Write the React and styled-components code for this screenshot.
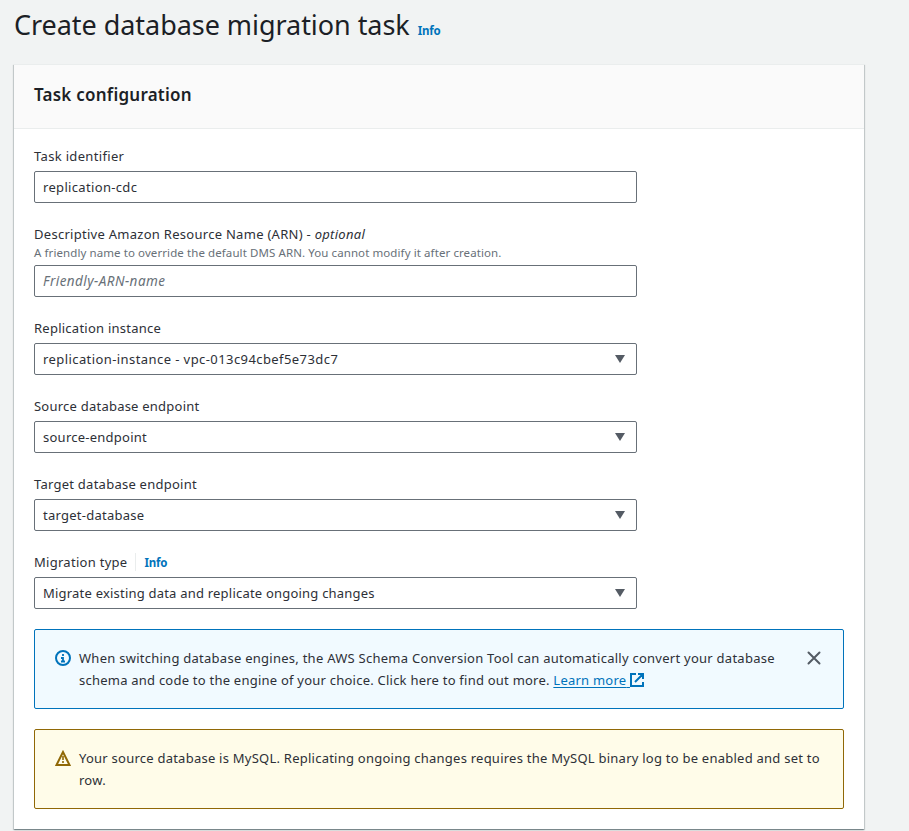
import React from "react";
import styled, { createGlobalStyle } from "styled-components";

const GlobalStyle = createGlobalStyle`
  *, *::before, *::after { box-sizing: border-box; }
  body {
    margin: 0;
    background: #f1f3f3;
    color: #2d3037;
    font-family: "Noto Sans", "Open Sans", sans-serif;
    font-size: 13px;
    line-height: 22px;
    overflow: hidden;
  }
`;

const Page = styled.main`
  width: 909px;
  height: 831px;
  padding: 7px 45px 0 14px;
  overflow: hidden;
`;

const TitleBar = styled.header`
  display: flex;
  align-items: baseline;
  gap: 8px;
  height: 57px;
`;

const Title = styled.h1`
  margin: 0;
  color: #1c1f26;
  font-size: 27px;
  font-weight: 400;
  line-height: 36px;
  white-space: nowrap;
  letter-spacing: -0.05px;
`;

const InfoLink = styled.a`
  color: #0073bb;
  font-size: 11.5px;
  font-weight: 700;
  line-height: 18px;
  letter-spacing: -0.2px;
`;

const Panel = styled.section`
  height: 765px;
  background: #fff;
  border-top: 1px solid #eaeded;
  box-shadow: 0 1px 1px 0 rgba(0, 28, 36, 0.3), 1px 1px 1px 0 rgba(0, 28, 36, 0.15),
    -1px 1px 1px 0 rgba(0, 28, 36, 0.15);
`;

const PanelHeader = styled.div`
  display: flex;
  align-items: center;
  height: 64px;
  padding: 0 20px 4px;
  background: #fafafa;
  border-bottom: 1px solid #eaeded;
`;

const PanelTitle = styled.h2`
  margin: 0;
  color: #1c1f26;
  font-size: 17px;
  font-weight: 600;
  line-height: 22px;
  letter-spacing: 0.24px;
`;

const Form = styled.div`
  display: flex;
  flex-direction: column;
  gap: 20px;
  padding: 16px 20px 20px;
`;

const Field = styled.div`
  width: 603px;
`;

const LabelRow = styled.div`
  display: flex;
  align-items: center;
  height: 22px;
  margin-bottom: ${(p) => (p.$tight ? 0 : 4)}px;

  ${InfoLink} {
    margin-top: 2px;
  }
`;

const Label = styled.label`
  white-space: pre;
  letter-spacing: ${(p) => p.$track ?? 0.25}px;
`;

const LabelDivider = styled.span`
  width: 1px;
  height: 18px;
  margin: 0 8px;
  background: #eaeded;
`;

const Hint = styled.div`
  height: 16px;
  margin-bottom: 4px;
  color: #687078;
  font-size: 11.5px;
  line-height: 16px;
  white-space: nowrap;
  letter-spacing: 0.09px;
`;

const Control = styled.div`
  display: flex;
  align-items: center;
  justify-content: space-between;
  height: 32px;
  padding: 0 11px 0 8px;
  border: 1px solid #687078;
  border-radius: 2px;
  background: #fff;
`;

const Value = styled.span`
  color: ${(p) => (p.$placeholder ? "#687078" : "inherit")};
  font-size: ${(p) => (p.$placeholder ? 13.5 : 13)}px;
  font-style: ${(p) => (p.$placeholder ? "italic" : "normal")};
  white-space: nowrap;
  letter-spacing: ${(p) => p.$track ?? 0.25}px;
`;

const CaretIcon = styled.svg`
  width: 10px;
  height: 8px;
  fill: #545b64;
`;

const tones = {
  info: { border: "#0073bb", background: "#f1faff" },
  warning: { border: "#906806", background: "#fffce9" },
};

const Alert = styled.div`
  display: flex;
  align-items: flex-start;
  height: 80px;
  padding: 17px 20px;
  border: 1px solid ${(p) => tones[p.$tone].border};
  border-radius: 2px;
  background: ${(p) => tones[p.$tone].background};
`;

const StatusIcon = styled.svg`
  flex: none;
  width: 16px;
  height: 16px;
  margin: 3px 8px 0 0;
  fill: none;
  stroke: ${(p) => tones[p.$tone].border};
  stroke-width: 2;
`;

const AlertBody = styled.div`
  flex: 1;
`;

const AlertLine = styled.div`
  white-space: pre;
  letter-spacing: ${(p) => p.$track ?? 0.25}px;
`;

const LearnMore = styled.a`
  color: #0073bb;
  text-decoration: underline;
  text-underline-offset: 2px;
`;

const ExternalIcon = styled.svg`
  width: 14px;
  height: 14px;
  vertical-align: -2px;
  fill: none;
  stroke: #0073bb;
  stroke-width: 2;
`;

const DismissIcon = styled.svg`
  flex: none;
  width: 14px;
  height: 14px;
  margin: 4px 2px 0 0;
  fill: none;
  stroke: #545b64;
  stroke-width: 2;
  stroke-linecap: round;
`;

function Select({ label, labelTrack, value, track, info }) {
  return (
    <Field>
      <LabelRow>
        <Label $track={labelTrack}>{label}</Label>
        {info && (
          <>
            <LabelDivider />
            <InfoLink>Info</InfoLink>
          </>
        )}
      </LabelRow>
      <Control role="combobox">
        <Value $track={track}>{value}</Value>
        <CaretIcon viewBox="0 0 10 8">
          <path d="M0 0h10L5 8z" />
        </CaretIcon>
      </Control>
    </Field>
  );
}

export default function App() {
  return (
    <>
      <GlobalStyle />
      <Page>
        <TitleBar>
          <Title>Create database migration task</Title>
          <InfoLink>Info</InfoLink>
        </TitleBar>
        <Panel>
          <PanelHeader>
            <PanelTitle>Task configuration</PanelTitle>
          </PanelHeader>
          <Form>
            <Field>
              <LabelRow>
                <Label $track={0.33}>Task identifier</Label>
              </LabelRow>
              <Control>
                <Value $track={0.33}>replication-cdc</Value>
              </Control>
            </Field>
            <Field>
              <LabelRow $tight>
                <Label $track={0.28}>
                  Descriptive Amazon Resource Name (ARN) - <i>optional</i>
                </Label>
              </LabelRow>
              <Hint>
                A friendly name to override the default DMS ARN. You cannot modify it after creation.
              </Hint>
              <Control>
                <Value $placeholder $track={0.45}>Friendly-ARN-name</Value>
              </Control>
            </Field>
            <Select label="Replication instance" value="replication-instance - vpc-013c94cbef5e73dc7" track={0.42} />
            <Select label="Source database endpoint" labelTrack={0.23} value="source-endpoint" />
            <Select label="Target database endpoint" value="target-database" />
            <Select label="Migration type" labelTrack={0.28} info value="Migrate existing data and replicate ongoing changes" track={0.21} />
            <Alert $tone="info">
              <StatusIcon $tone="info" viewBox="0 0 16 16">
                <circle cx="8" cy="8" r="7" />
                <path d="M8 4v2M6 8h2v3M6 11.500h4" strokeWidth="1.8" />
              </StatusIcon>
              <AlertBody>
                <AlertLine $track={0.26}>When switching database engines, the AWS Schema Conversion Tool can automatically convert your database</AlertLine>
                <AlertLine $track={0.23}>
                  schema and code to the engine of your choice. Click here to find out more.{" "}
                  <LearnMore>
                    Learn more{" "}
                    <ExternalIcon viewBox="0 0 14 14">
                      <path d="M6 1H1v12h12V9M8 1h5v5M13 1L5 9" />
                    </ExternalIcon>
                  </LearnMore>
                </AlertLine>
              </AlertBody>
              <DismissIcon viewBox="0 0 14 14">
                <path d="M1.500 1.500l11 11M12.500 1.500l-11 11" />
              </DismissIcon>
            </Alert>
            <Alert $tone="warning">
              <StatusIcon $tone="warning" viewBox="0 0 16 16">
                <path d="M8 2L1.500 15h13z" />
                <path d="M8 6v4M8 11v2" strokeWidth="1.6" />
              </StatusIcon>
              <AlertBody>
                <AlertLine $track={0.24}>Your source database is MySQL. Replicating ongoing changes requires the MySQL binary log to be enabled and set to</AlertLine>
                <AlertLine>row.</AlertLine>
              </AlertBody>
            </Alert>
          </Form>
        </Panel>
      </Page>
    </>
  );
}
